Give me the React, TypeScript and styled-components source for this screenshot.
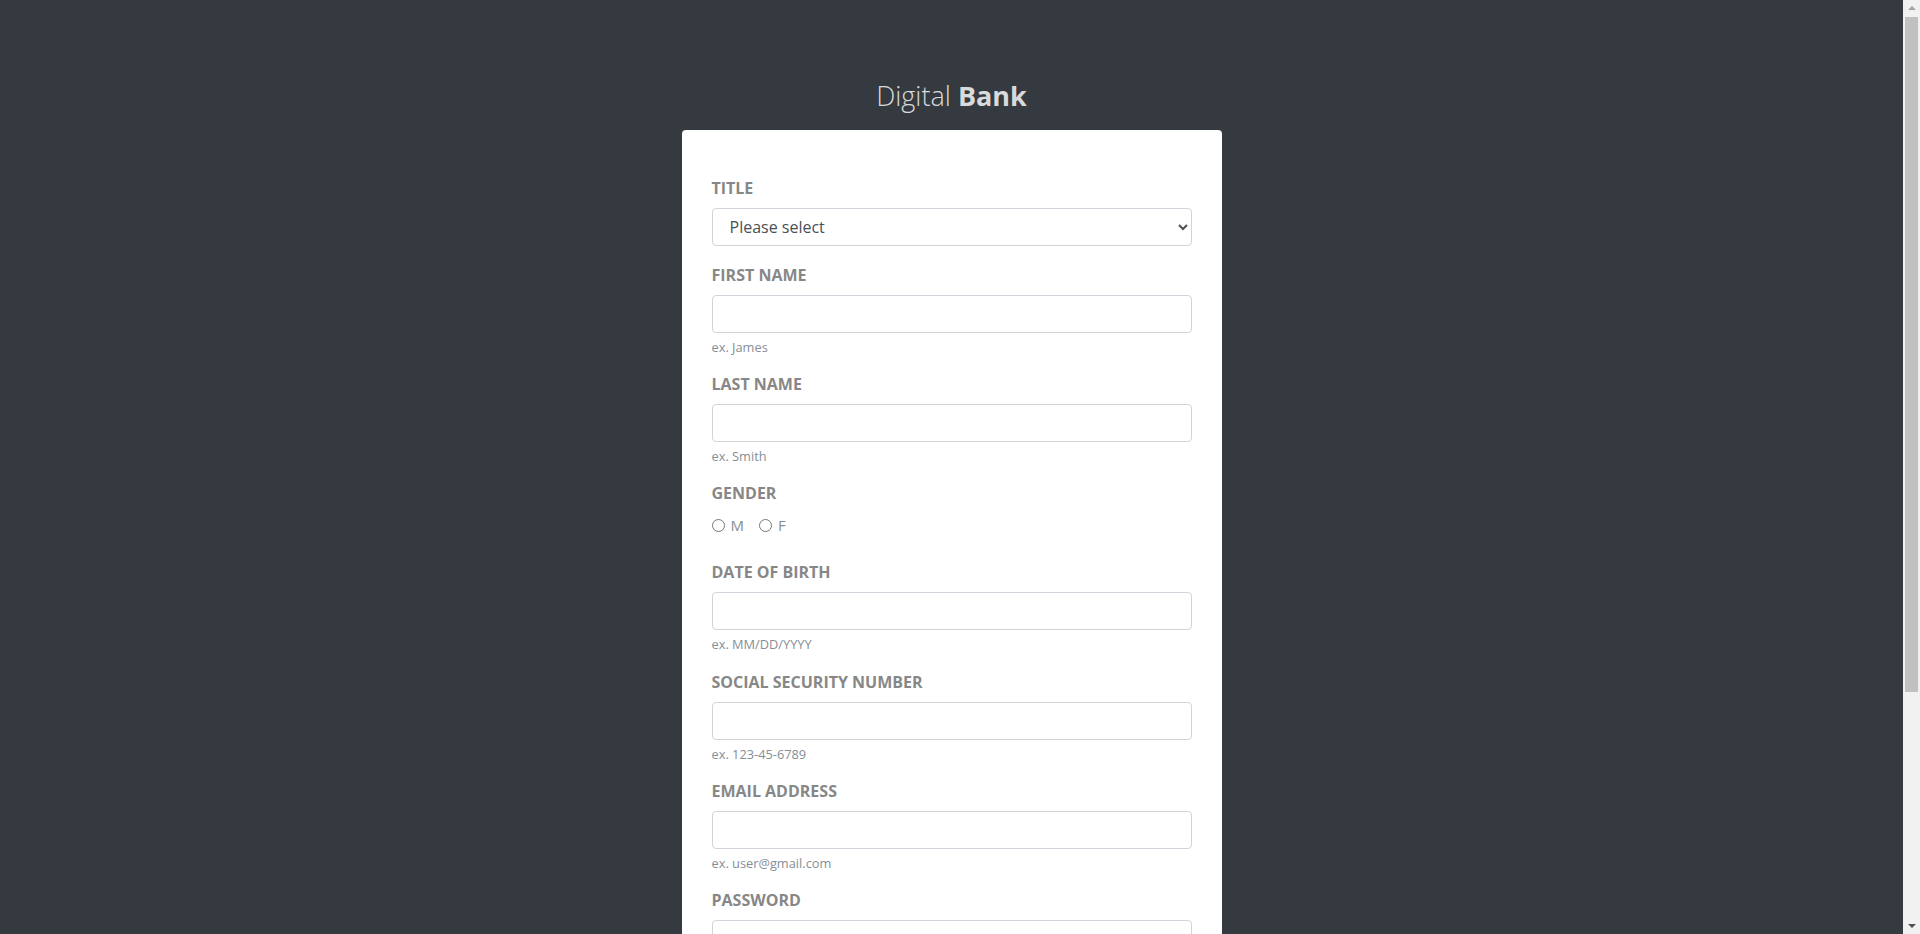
import React, { useState } from 'react';
import styled, { createGlobalStyle } from 'styled-components';

const GlobalStyle = createGlobalStyle`
  * {
    box-sizing: border-box;
  }
  html, body {
    scrollbar-width: none;
  }
  body {
    margin: 0;
    background-color: #343a40;
    font-family: "Open Sans", "Liberation Sans", sans-serif;
    font-size: 16px;
    line-height: 1.5;
    color: #212529;
  }
`;

type Field = {
  name: string;
  label: string;
  type?: string;
  help?: string;
};

const fields: Field[] = [
  { name: 'dob', label: 'Date of Birth', help: 'ex. MM/DD/YYYY' },
  { name: 'ssn', label: 'Social Security Number', help: 'ex. 123-45-6789' },
  { name: 'emailAddress', label: 'Email Address', type: 'email', help: 'ex. user@gmail.com' },
  { name: 'password', label: 'Password', type: 'password' },
  { name: 'confirmPassword', label: 'Confirm Password', type: 'password' },
];

function App() {
  const [ gender, setGender ] = useState('');

  return (
    <Page>
      <GlobalStyle />
      <Wrapper>
        <Logo>
          <LogoLight>Digital</LogoLight> <LogoBold>Bank</LogoBold>
        </Logo>
        <Card>
          <form onSubmit={ e => e.preventDefault() }>
            <FormGroup $gap={ 17 }>
              <Label htmlFor="title">Title</Label>
              <Select id="title" defaultValue="">
                <option value="">Please select</option>
                <option value="Mr.">Mr.</option>
                <option value="Ms.">Ms.</option>
                <option value="Mrs.">Mrs.</option>
              </Select>
            </FormGroup>

            <FormGroup>
              <Label htmlFor="firstName">First Name</Label>
              <Input id="firstName" type="text" />
              <Help>ex. James</Help>
            </FormGroup>

            <FormGroup>
              <Label htmlFor="lastName">Last Name</Label>
              <Input id="lastName" type="text" />
              <Help>ex. Smith</Help>
            </FormGroup>

            <FormGroup $gap={ 17 }>
              <Label as="div">Gender</Label>
              <RadioRow>
                <RadioLabel>
                  <Radio
                    type="radio"
                    name="gender"
                    checked={ gender === 'M' }
                    onChange={ () => setGender('M') }
                  />
                  M
                </RadioLabel>
                <RadioLabel>
                  <Radio
                    type="radio"
                    name="gender"
                    checked={ gender === 'F' }
                    onChange={ () => setGender('F') }
                  />
                  F
                </RadioLabel>
              </RadioRow>
            </FormGroup>

            { fields.map(f => (
              <FormGroup key={ f.name }>
                <Label htmlFor={ f.name }>{ f.label }</Label>
                <Input id={ f.name } type={ f.type || 'text' } />
                { f.help && <Help>{ f.help }</Help> }
              </FormGroup>
            )) }

            <SubmitButton type="submit">Next</SubmitButton>
            <RegisterLink>
              Already have an account? <a href="#">Sign in</a>
            </RegisterLink>
          </form>
        </Card>
      </Wrapper>

      {/* window scrollbar, as the browser drew it in the screenshot */}
      <ScrollBar>
        <ArrowUp />
        <Thumb />
        <ArrowDown />
      </ScrollBar>
    </Page>
  );
}
export default App;


const Page = styled.div`
  width: calc(100% - 17px);
  padding: 79px 0 72px;
`;

const Wrapper = styled.div`
  width: 540px;
  margin: 0 auto;
`;

const Logo = styled.div`
  text-align: center;
  font-size: 27px;
  line-height: 34px;
  color: rgba(255, 255, 255, .82);
  margin-bottom: 17px;
`;

const LogoLight = styled.span`
  font-weight: 300;
`;

const LogoBold = styled.span`
  font-weight: 700;
`;

const Card = styled.div`
  background-color: #fff;
  border-radius: 4px;
  padding: 46px 30px 30px;
`;

const FormGroup = styled.div<{ $gap?: number }>`
  margin-bottom: ${ props => props.$gap ?? 16 }px;
`;

const Label = styled.label`
  display: block;
  margin-bottom: 8px;
  font-size: 16px;
  font-weight: 700;
  line-height: 24px;
  text-transform: uppercase;
  color: #878787;
`;

const controlStyles = `
  display: block;
  width: 100%;
  height: 38px;
  padding: 6px 12px;
  font-family: "Open Sans", "Liberation Sans", sans-serif;
  font-size: 16px;
  line-height: 1.5;
  color: #495057;
  background-color: #fff;
  border: 1px solid #ced4da;
  border-radius: 4px;
  outline: none;
`;

const Input = styled.input`
  ${ controlStyles }
`;

const Select = styled.select`
  ${ controlStyles }
  padding: 6px 8px 6px 13px;
`;

const Help = styled.small`
  display: block;
  margin-top: 6px;
  font-size: 12.8px;
  line-height: 17.2px;
  color: #868e96;
`;

const RadioRow = styled.div`
  display: flex;
  align-items: center;
  height: 24px;
  margin-bottom: 23px;
`;

const RadioLabel = styled.label`
  display: flex;
  align-items: center;
  margin-right: 15px;
  font-size: 15px;
  color: #868e96;
  cursor: pointer;
`;

const Radio = styled.input`
  appearance: none;
  width: 13px;
  height: 13px;
  margin: 0 6px 0 0;
  border: 1px solid #767676;
  border-radius: 50%;
  background: #fff;
  &:checked {
    border: 4px solid #0075ff;
  }
`;

const SubmitButton = styled.button`
  display: block;
  width: 100%;
  height: 38px;
  margin-top: 4px;
  border: none;
  border-radius: 0;
  background-color: #007bff;
  color: #fff;
  font-family: "Open Sans", "Liberation Sans", sans-serif;
  font-size: 16px;
  cursor: pointer;
`;

const RegisterLink = styled.p`
  margin: 20px 0 0;
  text-align: center;
  font-size: 14px;
  color: #878787;
  a {
    color: #007bff;
    text-decoration: none;
  }
`;

const ScrollBar = styled.div`
  position: fixed;
  top: 0;
  right: 0;
  width: 17px;
  height: 100vh;
  background-color: #f1f1f1;
  display: flex;
  flex-direction: column;
  align-items: center;
`;

const ArrowUp = styled.div`
  flex: none;
  width: 0;
  height: 0;
  margin: 6px 0 6px;
  border-left: 4px solid transparent;
  border-right: 4px solid transparent;
  border-bottom: 4px solid #a3a3a3;
`;

const Thumb = styled.div`
  flex: none;
  width: 13px;
  height: 675px;
  margin-top: 1px;
  background-color: #c1c1c1;
`;

const ArrowDown = styled.div`
  flex: none;
  width: 0;
  height: 0;
  margin-top: auto;
  margin-bottom: 6px;
  border-left: 4px solid transparent;
  border-right: 4px solid transparent;
  border-top: 4px solid #505050;
`;
